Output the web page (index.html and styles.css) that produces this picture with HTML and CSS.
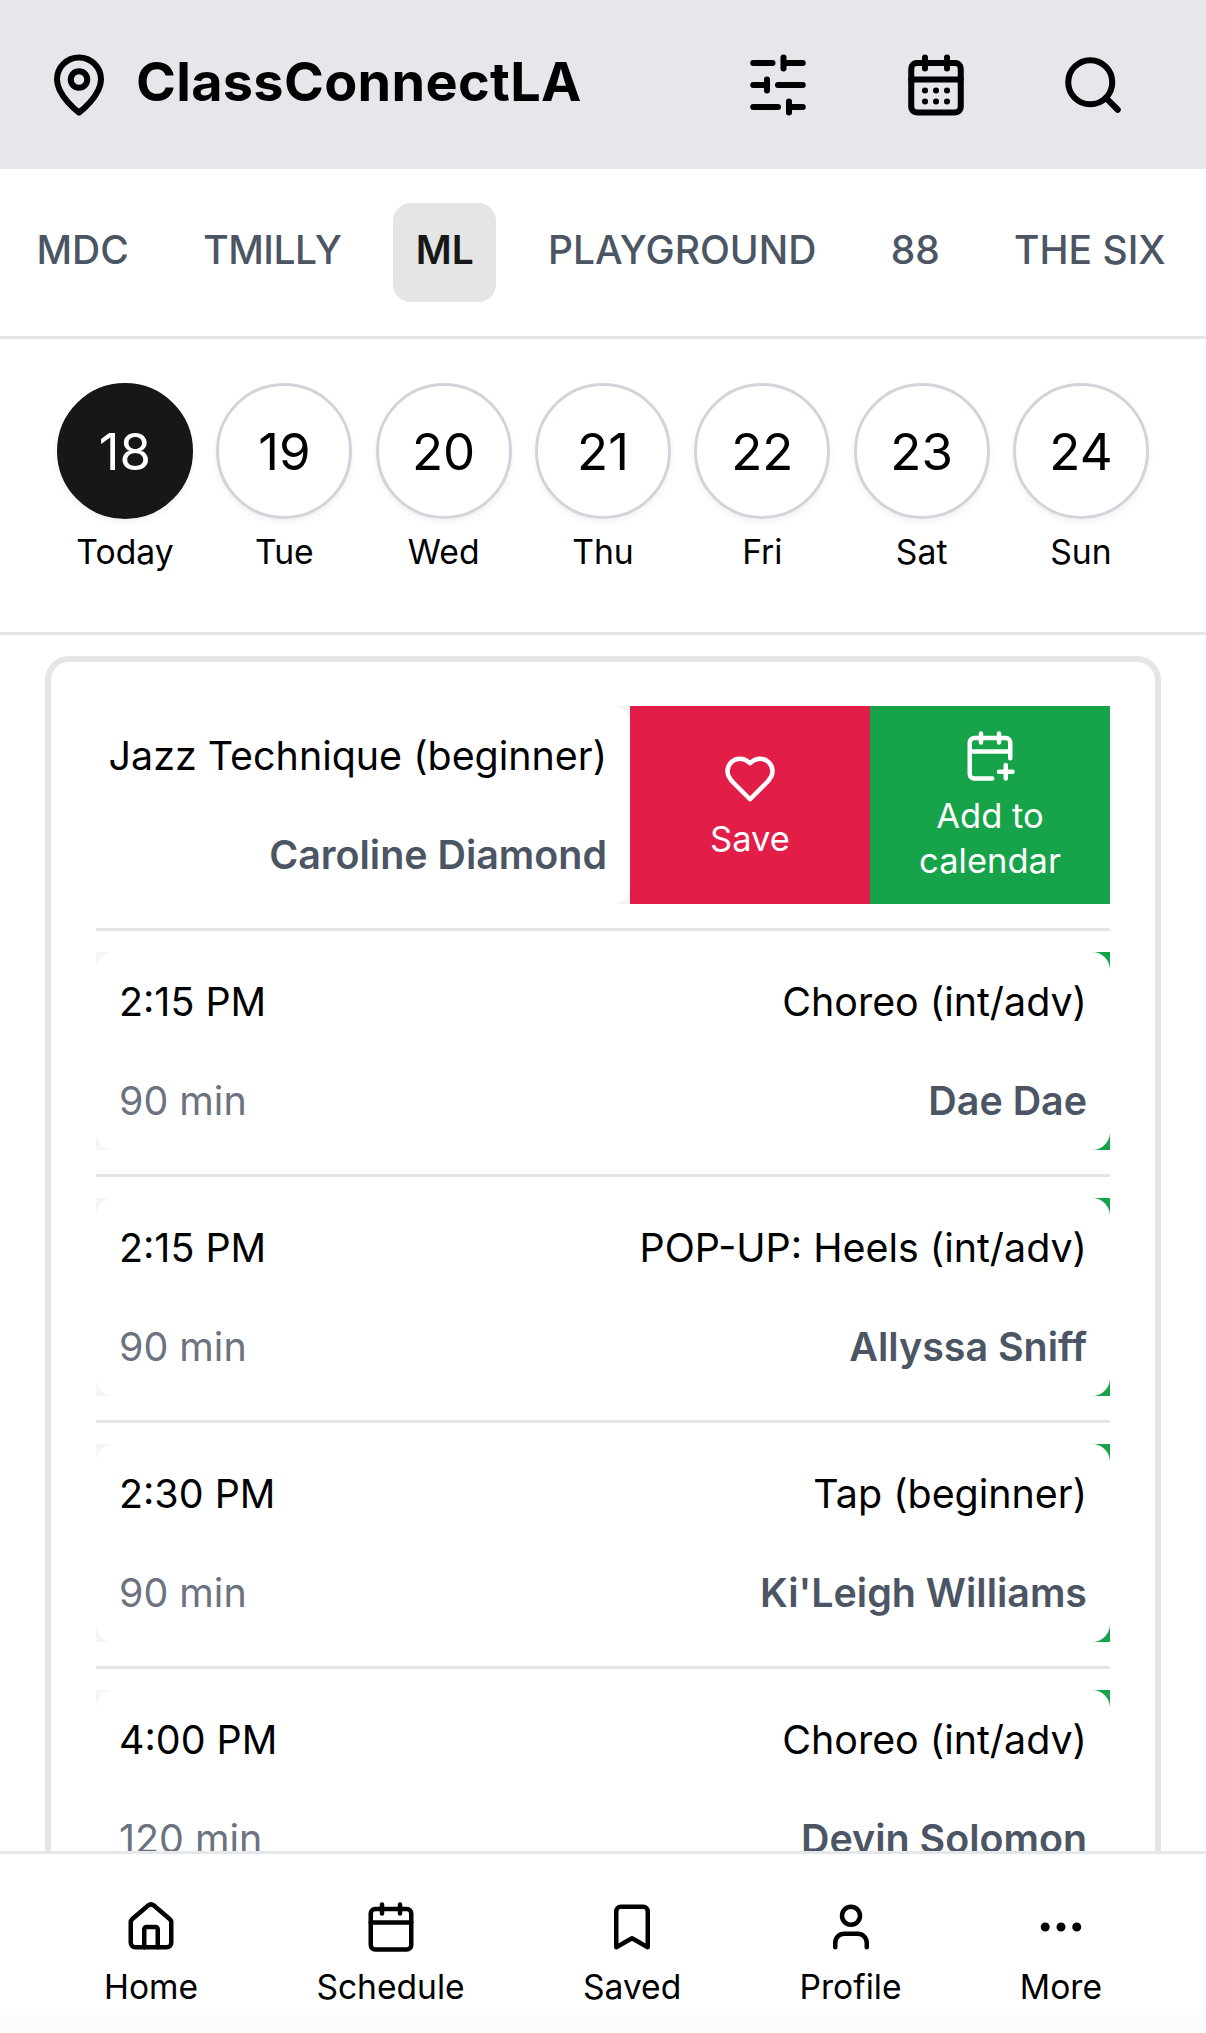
FILE: index.html
```html
<!DOCTYPE html>
<html lang="en">
<head>
<meta charset="utf-8">
<title>ClassConnectLA</title>
<link rel="stylesheet" href="styles.css">
</head>
<body>
<svg class="defs" width="0" height="0" aria-hidden="true">
  <defs>
    <symbol id="i-pin" viewBox="0 0 24 24"><path d="M20 10c0 6-8 12-8 12s-8-6-8-12a8 8 0 0 1 16 0Z"/><circle cx="12" cy="10" r="3"/></symbol>
    <symbol id="i-sliders" viewBox="0 0 24 24"><path d="M21 4h-7M10 4H3M21 12h-9M8 12H3M21 20h-5M12 20H3M14 2v4M8 10v4M16 18v4"/></symbol>
    <symbol id="i-caldays" viewBox="0 0 24 24"><path d="M8 2v4M16 2v4"/><rect x="3" y="4" width="18" height="18" rx="2"/><path d="M3 10h18M8 14h.01M12 14h.01M16 14h.01M8 18h.01M12 18h.01M16 18h.01"/></symbol>
    <symbol id="i-search" viewBox="0 0 24 24"><circle cx="11" cy="11" r="8"/><path d="m21 21-4.3-4.3"/></symbol>
    <symbol id="i-heart" viewBox="0 0 24 24"><path d="M19 14c1.49-1.46 3-3.21 3-5.5A5.5 5.5 0 0 0 16.5 3c-1.76 0-3 .5-4.5 2-1.5-1.5-2.74-2-4.5-2A5.5 5.5 0 0 0 2 8.5c0 2.3 1.5 4.05 3 5.5l7 7Z"/></symbol>
    <symbol id="i-calplus" viewBox="0 0 24 24"><path d="M8 2v4M16 2v4M21 13V6a2 2 0 0 0-2-2H5a2 2 0 0 0-2 2v14a2 2 0 0 0 2 2h8M3 10h18M16 19h6M19 16v6"/></symbol>
    <symbol id="i-home" viewBox="0 0 24 24"><path d="M15 21v-8a1 1 0 0 0-1-1h-4a1 1 0 0 0-1 1v8"/><path d="M3 10a2 2 0 0 1 .709-1.528l7-6a2 2 0 0 1 2.582 0l7 6A2 2 0 0 1 21 10v9a2 2 0 0 1-2 2H5a2 2 0 0 1-2-2z"/></symbol>
    <symbol id="i-cal" viewBox="0 0 24 24"><path d="M8 2v4M16 2v4"/><rect x="3" y="4" width="18" height="18" rx="2"/><path d="M3 10h18"/></symbol>
    <symbol id="i-bookmark" viewBox="0 0 24 24"><path d="m19 21-7-4-7 4V5a2 2 0 0 1 2-2h10a2 2 0 0 1 2 2v16z"/></symbol>
    <symbol id="i-user" viewBox="0 0 24 24"><path d="M19 21v-2a4 4 0 0 0-4-4H9a4 4 0 0 0-4 4v2"/><circle cx="12" cy="7" r="4"/></symbol>
    <symbol id="i-more" viewBox="0 0 24 24"><circle cx="12" cy="12" r="1"/><circle cx="19" cy="12" r="1"/><circle cx="5" cy="12" r="1"/></symbol>
  </defs>
</svg>
<div class="app">
  <header class="topbar">
    <div class="brand">
      <svg class="icon icon-lg"><use href="#i-pin"/></svg>
      <h1 class="brand-name">ClassConnectLA</h1>
    </div>
    <div class="top-actions">
      <svg class="icon icon-lg"><use href="#i-sliders"/></svg>
      <svg class="icon icon-lg"><use href="#i-caldays"/></svg>
      <svg class="icon icon-lg"><use href="#i-search"/></svg>
    </div>
  </header>

  <nav class="tabs">
    <span class="tab">MDC</span>
    <span class="tab tab-tight">TMILLY</span>
    <span class="tab tab-active">ML</span>
    <span class="tab">PLAYGROUND</span>
    <span class="tab">88</span>
    <span class="tab">THE SIX</span>
  </nav>

  <section class="dates">
    <div class="date"><span class="circle circle-active">18</span><span class="day">Today</span></div>
    <div class="date"><span class="circle">19</span><span class="day">Tue</span></div>
    <div class="date"><span class="circle">20</span><span class="day">Wed</span></div>
    <div class="date"><span class="circle">21</span><span class="day">Thu</span></div>
    <div class="date"><span class="circle">22</span><span class="day">Fri</span></div>
    <div class="date"><span class="circle">23</span><span class="day">Sat</span></div>
    <div class="date"><span class="circle">24</span><span class="day">Sun</span></div>
  </section>

  <main class="content">
    <div class="card">
      <article class="item">
        <div class="row row-swiped">
          <div class="row-body row-body-swiped">
            <div class="line line-end"><span class="title">Jazz Technique (beginner)</span></div>
            <div class="line line-end"><span class="teacher">Caroline Diamond</span></div>
          </div>
          <button class="action action-save">
            <svg class="icon icon-action"><use href="#i-heart"/></svg>
            <span>Save</span>
          </button>
          <button class="action action-add">
            <svg class="icon icon-action"><use href="#i-calplus"/></svg>
            <span>Add to calendar</span>
          </button>
        </div>
      </article>

      <article class="item">
        <div class="row">
          <div class="row-body">
            <div class="line"><span class="time">2:15 PM</span><span class="title">Choreo (int/adv)</span></div>
            <div class="line"><span class="duration">90 min</span><span class="teacher">Dae Dae</span></div>
          </div>
        </div>
      </article>

      <article class="item">
        <div class="row">
          <div class="row-body">
            <div class="line"><span class="time">2:15 PM</span><span class="title">POP-UP: Heels (int/adv)</span></div>
            <div class="line"><span class="duration">90 min</span><span class="teacher">Allyssa Sniff</span></div>
          </div>
        </div>
      </article>

      <article class="item">
        <div class="row">
          <div class="row-body">
            <div class="line"><span class="time">2:30 PM</span><span class="title">Tap (beginner)</span></div>
            <div class="line"><span class="duration">90 min</span><span class="teacher">Ki'Leigh Williams</span></div>
          </div>
        </div>
      </article>

      <article class="item">
        <div class="row">
          <div class="row-body">
            <div class="line"><span class="time">4:00 PM</span><span class="title">Choreo (int/adv)</span></div>
            <div class="line"><span class="duration">120 min</span><span class="teacher">Devin Solomon</span></div>
          </div>
        </div>
      </article>
    </div>
  </main>

  <footer class="bottom-nav">
    <div class="nav-item"><svg class="icon icon-nav"><use href="#i-home"/></svg><span>Home</span></div>
    <div class="nav-item"><svg class="icon icon-nav"><use href="#i-cal"/></svg><span>Schedule</span></div>
    <div class="nav-item"><svg class="icon icon-nav"><use href="#i-bookmark"/></svg><span>Saved</span></div>
    <div class="nav-item"><svg class="icon icon-nav"><use href="#i-user"/></svg><span>Profile</span></div>
    <div class="nav-item"><svg class="icon icon-nav"><use href="#i-more"/></svg><span>More</span></div>
  </footer>
</div>
</body>
</html>
```

FILE: styles.css
```css
* { box-sizing: border-box; }
html, body { margin: 0; padding: 0; background: #fff; }
body { font-family: Inter, "Liberation Sans", sans-serif; color: #000; }
.defs { display: block; height: 0; }
.app { width: 1206px; height: 2033px; display: flex; flex-direction: column; overflow: hidden; }

.icon { fill: none; stroke: currentColor; stroke-width: 2; stroke-linecap: round; stroke-linejoin: round; flex: none; display: block; }
.icon-lg { width: 66px; height: 66px; stroke-width: 2.2; }
.icon-action { width: 54px; height: 54px; }
.icon-nav { width: 54px; height: 54px; }

.topbar { height: 169px; flex: none; background: #e5e7eb; display: flex; align-items: center; justify-content: space-between; padding: 0 80px 0 46px; }
.brand { display: flex; align-items: center; gap: 24px; }
.brand-name { margin: 0 0 5px; font-size: 54px; font-weight: 700; letter-spacing: .3px; line-height: 1; }
.top-actions { display: flex; gap: 91.5px; }

.tabs { flex: none; height: 170px; display: flex; align-items: center; gap: 29.3px; padding: 0 14px; border-bottom: 3px solid #e5e5e5; }
.tab { font-size: 39px; font-weight: 500; color: #4b5563; padding: 0 22.5px 5px; height: 99px; line-height: 94px; border-radius: 18px; white-space: nowrap; }
.tab-tight { letter-spacing: -.45px; }
.tab-active { background: #e5e5e5; color: #171717; font-weight: 600; }

.dates { flex: none; height: 296px; display: flex; justify-content: space-between; padding: 44px 57px 0; border-bottom: 3px solid #e5e5e5; }
.date { width: 136px; display: flex; flex-direction: column; align-items: center; gap: 9px; }
.circle { width: 136px; height: 136px; border-radius: 50%; border: 3px solid #d1d5db; display: flex; align-items: center; justify-content: center; font-size: 51px; box-shadow: 0 3px 6px rgba(0,0,0,.06); }
.circle-active { background: #171717; border-color: #171717; color: #fff; }
.day { font-size: 33.7px; line-height: 48px; }

.content { flex: 1; min-height: 0; overflow: hidden; padding: 21px 45px 0; }
.card { border: 6px solid #e5e5e5; border-radius: 24px; padding: 44px 45px 0; background: #fff; }

.item { padding-bottom: 24px; margin-bottom: 21px; border-bottom: 3px solid #e5e5e5; }
.row { height: 198px; background: linear-gradient(to right, #f5f5f5 50%, #16a34a 50%); overflow: hidden; }
.row-body { height: 100%; background: #fff; border-radius: 18px; padding: 0 23px; display: flex; flex-direction: column; justify-content: space-between; }
.line { display: flex; justify-content: space-between; align-items: center; height: 99px; }
.line-end { justify-content: flex-end; }
.time, .title { font-size: 39.4px; color: #000; white-space: nowrap; }
.duration { font-size: 39.4px; color: #6b7280; white-space: nowrap; }
.teacher { font-size: 39.4px; font-weight: 600; color: #4b5563; white-space: nowrap; }

.row-swiped { display: flex; background: #f5f5f5; }
.row-body-swiped { flex: 0 0 534px; padding-left: 0; border-radius: 0 18px 18px 0; }
.action { flex: 0 0 240px; border: 0; margin: 0; padding: 2px 20px 0; color: #fff; font-family: inherit; font-size: 34.5px; line-height: 45px; display: flex; flex-direction: column; align-items: center; justify-content: center; gap: 10px; text-align: center; }
.action-save { background: #e11d48; }
.action-add { background: #16a34a; }

.bottom-nav { flex: none; height: 182px; background: linear-gradient(to bottom, #fff 85%, #fafafa 100%); border-top: 3px solid #e5e7eb; display: flex; justify-content: space-between; padding: 46px 104px 0; }
.nav-item { display: flex; flex-direction: column; align-items: center; gap: 9px; font-size: 33.6px; line-height: 48px; }
```
